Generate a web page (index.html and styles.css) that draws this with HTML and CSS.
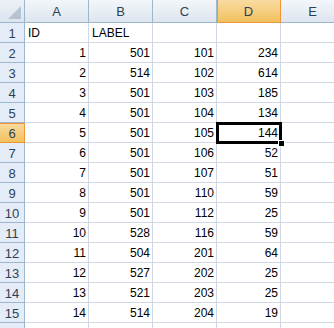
FILE: index.html
```html
<!DOCTYPE html>
<html lang="en">
<head>
    <meta charset="UTF-8">
    <title>Sheet1</title>
    <link rel="stylesheet" href="styles.css">
</head>
<body>
    <table class="sheet">
        <thead>
            <tr>
                <th class="corner"><span class="tri"></span></th>
                <th>A</th>
                <th>B</th>
                <th>C</th>
                <th class="active">D</th>
                <th>E</th>
            </tr>
        </thead>
        <tbody>
            <tr><th>1</th><td class="txt">ID</td><td class="txt">LABEL</td><td></td><td></td><td></td></tr>
            <tr><th>2</th><td>1</td><td>501</td><td>101</td><td>234</td><td></td></tr>
            <tr><th>3</th><td>2</td><td>514</td><td>102</td><td>614</td><td></td></tr>
            <tr><th>4</th><td>3</td><td>501</td><td>103</td><td>185</td><td></td></tr>
            <tr><th>5</th><td>4</td><td>501</td><td>104</td><td>134</td><td></td></tr>
            <tr><th class="active">6</th><td>5</td><td>501</td><td>105</td><td class="sel">144<span class="box"></span><span class="handle"></span></td><td></td></tr>
            <tr><th>7</th><td>6</td><td>501</td><td>106</td><td>52</td><td></td></tr>
            <tr><th>8</th><td>7</td><td>501</td><td>107</td><td>51</td><td></td></tr>
            <tr><th>9</th><td>8</td><td>501</td><td>110</td><td>59</td><td></td></tr>
            <tr><th>10</th><td>9</td><td>501</td><td>112</td><td>25</td><td></td></tr>
            <tr><th>11</th><td>10</td><td>528</td><td>116</td><td>59</td><td></td></tr>
            <tr><th>12</th><td>11</td><td>504</td><td>201</td><td>64</td><td></td></tr>
            <tr><th>13</th><td>12</td><td>527</td><td>202</td><td>25</td><td></td></tr>
            <tr><th>14</th><td>13</td><td>521</td><td>203</td><td>25</td><td></td></tr>
            <tr><th>15</th><td>14</td><td>514</td><td>204</td><td>19</td><td></td></tr>
            <tr><th></th><td></td><td></td><td></td><td></td><td></td></tr>
        </tbody>
    </table>
</body>
</html>
```

FILE: styles.css
```css
* {
    margin: 0;
    padding: 0;
    box-sizing: border-box;
}

body {
    background-color: #ffffff;
    overflow: hidden;
    font-family: "Liberation Sans", Arial, sans-serif;
    font-size: 12px;
    color: #000000;
}

.sheet {
    border-collapse: separate;
    border-spacing: 0;
    table-layout: fixed;
    width: 345px;
}

.sheet th,
.sheet td {
    width: 64px;
    height: 20px;
    border-right: 1px solid #d0d7e5;
    border-bottom: 1px solid #d0d7e5;
    font-weight: normal;
    white-space: nowrap;
    overflow: visible;
}

.sheet td {
    text-align: right;
    vertical-align: bottom;
    padding: 0 2px 3px 3px;
    line-height: 12px;
}

.sheet td.txt {
    text-align: left;
}

/* headers */
.sheet thead th {
    height: 23px;
    background: linear-gradient(#f3f6fa, #dde5ef);
    border-right: 1px solid #9eb6ce;
    border-bottom: 1px solid #9eb6ce;
    color: #2f3f55;
    font-size: 13px;
    text-align: center;
    vertical-align: middle;
    padding-top: 1px;
}

.sheet tbody th {
    width: 25px;
    background-color: #e4ecf7;
    border-right: 1px solid #9eb6ce;
    border-bottom: 1px solid #9eb6ce;
    color: #2f3f55;
    font-size: 13px;
    text-align: center;
    vertical-align: middle;
    padding-top: 1px;
}

.sheet thead th.corner {
    width: 25px;
    position: relative;
    background: linear-gradient(#eef2f7, #dce4ee);
}

.tri {
    position: absolute;
    right: 3px;
    bottom: 3px;
    width: 0;
    height: 0;
    border-left: 13px solid transparent;
    border-bottom: 13px solid #b6c3d3;
}

.sheet thead th.active {
    background: linear-gradient(#f9dba0, #f1c15f);
    border-right-color: #f29536;
    border-bottom: 1px solid #f29536;
    box-shadow: inset 1px 0 0 #f29536;
}

.sheet tbody th.active {
    background: linear-gradient(#f9dba0, #f1c15f);
    border-right-color: #f29536;
    border-bottom-color: #f29536;
    box-shadow: inset 0 1px 0 #f29536;
}

/* selected cell */
.sel {
    position: relative;
}

.box {
    position: absolute;
    left: -1px;
    top: -1px;
    right: -2px;
    bottom: -2px;
    border: 3px solid #000000;
}

.handle {
    position: absolute;
    right: -5px;
    bottom: -5px;
    width: 7px;
    height: 7px;
    background-color: #000000;
    border: 1px solid #ffffff;
    z-index: 1;
}
```
